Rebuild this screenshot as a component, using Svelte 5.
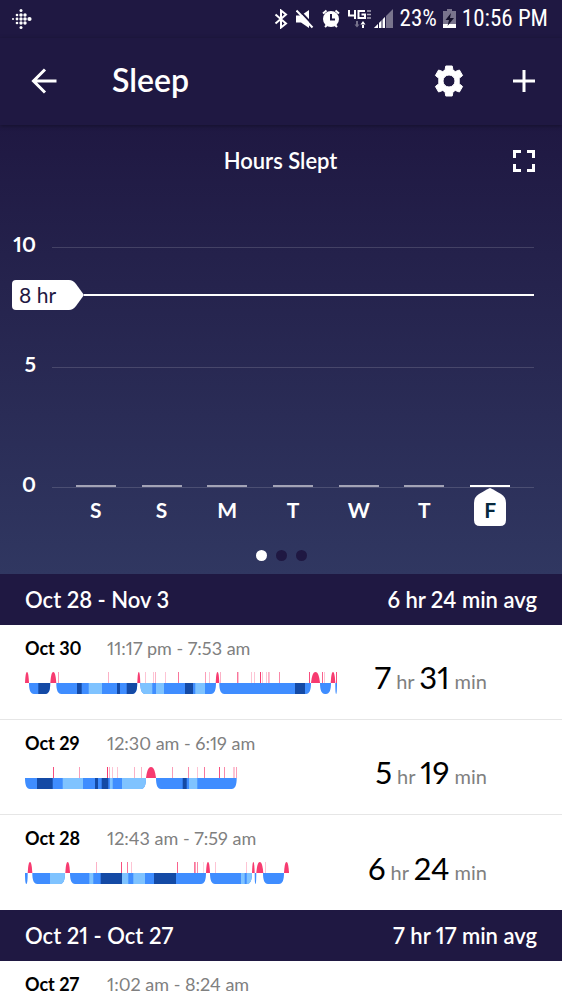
<script>
  let ticks = [10, 5, 0];
  let goal = 8;
  let days = ["S", "S", "M", "T", "W", "T", "F"];
  let today = 6;
  let page = 0;

  const colors = { light: "#7fc3ff", rem: "#3f8dff", deep: "#144aa5", awake: "#f73b70" };

  // asleep / awake: [from, to], bands: [from, to, stage], wakes: [at, opacity]
  let weeks = [
    {
      range: "Oct 28 - Nov 3",
      avg: "6 hr 24 min avg",
      logs: [
        {
          date: "Oct 30", time: "11:17 pm - 7:53 am", hr: 7, min: 31,
          asleep: [[4, 25.3], [31.3, 112.3], [115.3, 191], [194.3, 286], [295, 306], [310.3, 312]],
          awake: [[0, 4], [25.3, 31.3], [112.3, 115.3], [190.7, 194.3], [286, 295], [305.7, 310.3]],
          bands: [
            [13.3, 25.3, "deep"], [52, 56.7, "deep"], [63.7, 77, "light"], [92, 95, "deep"],
            [101.7, 112.3, "deep"], [115.3, 127.3, "light"], [131, 139, "light"],
            [160, 168, "deep"], [170.3, 180, "light"], [270, 280, "deep"]
          ],
          wakes: [
            [33, 0.5], [83, 0.4], [120, 0.3], [128, 0.3], [130, 0.4], [140, 0.3], [153, 0.7],
            [180, 0.5], [184, 0.3], [195, 0.4], [212, 0.7], [213, 0.3], [226, 0.3], [229, 0.3],
            [235, 1], [237, 0.3], [241, 0.3], [243, 0.4], [244, 0.3], [254, 0.6], [284, 0.9],
            [297, 0.8], [299, 0.3], [311, 0.9]
          ]
        },
        {
          date: "Oct 29", time: "12:30 am - 6:19 am", hr: 5, min: 19,
          asleep: [[0, 121], [131, 211.7]],
          awake: [[121, 131]],
          bands: [
            [12, 27.7, "deep"], [37.7, 58, "light"], [70, 73, "deep"], [76.7, 83.3, "deep"],
            [85, 87.7, "light"], [97, 121, "light"], [157.7, 161.7, "deep"], [164, 172.3, "light"]
          ],
          wakes: [
            [28, 0.9], [54, 0.5], [82, 1], [84, 0.4], [87, 0.3], [92, 0.3], [109, 0.4],
            [116, 0.4], [147, 0.5], [163, 0.6], [172, 0.3], [179, 0.7], [194, 0.9], [199, 0.6],
            [208, 0.3], [209, 0.3], [211, 0.5]
          ]
        },
        {
          date: "Oct 28", time: "12:43 am - 7:59 am", hr: 6, min: 24,
          asleep: [[0, 2.7], [7.3, 40], [45, 181], [185, 227], [229.7, 231.3], [238, 259]],
          awake: [[2.7, 7.3], [40.3, 45], [181, 185], [227, 229.7], [231.3, 238.3], [259, 264]],
          bands: [
            [25, 40, "light"], [64.3, 68.3, "light"], [75.7, 97, "deep"], [97, 103.3, "light"],
            [108.3, 120, "light"], [129, 151, "deep"], [216, 219.7, "light"], [221.7, 227, "light"]
          ],
          wakes: [
            [71, 0.4], [96, 0.9], [102, 0.7], [106, 0.3], [152, 0.8], [169, 0.7], [170, 0.5],
            [172, 0.6], [178, 0.2], [190, 0.3], [221, 0.3], [240, 0.3]
          ]
        }
      ]
    },
    {
      range: "Oct 21 - Oct 27",
      avg: "7 hr 17 min avg",
      logs: [{ date: "Oct 27", time: "1:02 am - 8:24 am" }]
    }
  ];

  // blue block with rounded bottom corners
  function trough([a, b]) {
    const r = Math.min(5, (b - a) / 2);
    return `M${a} 11C${a} 18 ${a + r * 0.3} 22 ${a + r} 22H${b - r}C${b - r * 0.3} 22 ${b} 18 ${b} 11Z`;
  }

  // red bump
  function bump([a, b]) {
    const w = b - a;
    return `M${a} 11C${a + w * 0.1} 4 ${a + w * 0.2} 0 ${a + w / 2} 0S${b - w * 0.1} 4 ${b} 11Z`;
  }

  // dots of the status bar logo: x, y, radius
  let dots = [
    [2, 10, 1], [6, 6, 1.3], [6, 10, 1.4], [6, 14, 1.3],
    [10, 1.5, 1.5], [10, 6, 1.7], [10, 10, 1.7], [10, 14, 1.7], [10, 18.5, 1.5],
    [14, 6, 1.7], [14, 10, 1.8], [14, 14, 1.7], [18.5, 10, 2.1]
  ];
</script>

<div class="screen">
  <div class="status">
    <svg class="logo" width="21" height="20" viewBox="0 0 21 20" fill="#fff">
      {#each dots as [x, y, r]}
        <circle cx={x} cy={y} {r} />
      {/each}
    </svg>
    <svg class="icon" width="14" height="20" viewBox="0 0 14 20" fill="none" stroke="#fff" stroke-width="2">
      <path d="M1.5 5.5 12 14.5 7 18.5V1.5L12 5.5 1.5 14.5" />
    </svg>
    <svg class="icon" width="18" height="20" viewBox="0 0 18 20">
      <path d="M0 6.5h5L13 1v18l-8-5.500H0Z" fill="#fff" />
      <path d="M2 0 18 17" stroke="#1f1842" stroke-width="2" />
      <path d="M.5 1.5 16.5 18.5" stroke="#fff" stroke-width="2" />
    </svg>
    <svg class="icon" width="18" height="20" viewBox="0 0 18 20">
      <circle cx="9" cy="10" r="8" fill="#fff" />
      <path d="M1 4.5 4.5 1.5M17 4.5 13.5 1.5M3 18l2-2M15 18l-2-2" stroke="#fff" stroke-width="2" />
      <path d="M9 5v5.500h4" fill="none" stroke="#1f1842" stroke-width="2" />
    </svg>
    <svg width="24" height="20" viewBox="0 0 24 20" fill="none">
      <path d="M1 1v5.500h7M7 1v9M17 2h-6.500v7H17V5.500h-3.500" stroke="#fff" stroke-width="2" />
      <path d="M19 2h4M19 5.500h4M19 9h4" stroke="#a9a5b8" stroke-width="1.500" />
      <path d="M6.500 15.500h5L9 18.500ZM8 12h2v4H8Z" fill="#76718b" />
      <path d="M12.500 15.500h5L15 12ZM14 15h2v4h-2Z" fill="#fff" />
    </svg>
    <svg class="signal" width="20" height="20" viewBox="0 0 20 20">
      <path d="M0 19 19 0V19Z" fill="#79748d" />
      <path d="M0 19 11 8V19Z" fill="#fff" />
      <path d="M4.500 12v7M8 9v10M11.500 6v13" stroke="#1f1842" />
    </svg>
    <span>23%</span>
    <svg width="13" height="20" viewBox="0 0 13 20">
      <path d="M4 0h5v2h4v17H0V2h4Z" fill="#79748d" />
      <path d="M0 15h13v4H0Z" fill="#fff" />
      <path d="M8 4 2.500 11H6l-1.500 6L11 9H7Z" fill="#14102b" />
    </svg>
    <span>10:56 PM</span>
  </div>

  <header>
    <button aria-label="Back">
      <svg width="26" height="26" viewBox="0 0 26 26" fill="none" stroke="#fff" stroke-width="3">
        <path d="M25.500 13H3M14 1.500 2.500 13 14 24.500" />
      </svg>
    </button>
    <h1>Sleep</h1>
    <button aria-label="Settings">
      <svg width="32" height="32" viewBox="0 0 32 32">
        <path
          fill="#fff"
          stroke="#fff"
          stroke-linejoin="round"
          fill-rule="evenodd"
          d="M12.800 1h6.400l.8 4.200 2.300 1.300 4.100-1.500 3.200 5.500-3.400 2.800v5.400l3.400 2.800-3.200 5.500-4.100-1.500-2.300 1.300-.8 4.200h-6.400l-.8-4.200-2.300-1.300L5.600 27l-3.200-5.500 3.400-2.800v-5.400L2.400 10.500 5.600 5l4.100 1.500L12 5.200ZM16 10a6 6 0 1 0 0 12 6 6 0 1 0 0-12Z"
        />
      </svg>
    </button>
    <button aria-label="Add">
      <svg width="24" height="24" viewBox="0 0 24 24" stroke="#fff" stroke-width="3">
        <path d="M12 1v22M1 12h22" />
      </svg>
    </button>
  </header>

  <section class="chart">
    <div class="chart-head">
      <h2>Hours Slept</h2>
      <button aria-label="Full screen">
        <svg width="24" height="24" viewBox="0 0 24 24" fill="none" stroke="#fff" stroke-width="3">
          <path d="M9 2.500H2.500V9M15 2.500h6.500V9M9 21.500H2.500V15M15 21.500h6.500V15" />
        </svg>
      </button>
    </div>

    <div class="plot">
      {#each ticks as tick}
        <div class="tick"><span>{tick}</span><i></i></div>
      {/each}
      <div class="goal" style="top: {100 - goal * 10}%">
        <div class="flag">
          <svg width="72" height="30" viewBox="0 0 72 30">
            <path d="M4 0H57Q61 0 64 4L72 15 64 26Q61 30 57 30H4Q0 30 0 26V4Q0 0 4 0Z" fill="#fff" />
          </svg>
          <span>{goal} hr</span>
        </div>
        <i></i>
      </div>
    </div>

    <div class="days">
      {#each days as day, i}
        <div class="day" class:today={i === today}>
          <i></i>
          {#if i === today}
            <svg width="32" height="38" viewBox="0 0 32 38">
              <path d="M16 0Q17 0 27 6Q32 9 32 15V32Q32 38 26 38H6Q0 38 0 32V15Q0 9 5 6Q15 0 16 0Z" fill="#fff" />
            </svg>
          {/if}
          <span>{day}</span>
        </div>
      {/each}
    </div>

    <div class="pager">
      {#each [0, 1, 2] as n}
        <button aria-label="Page {n + 1}" class:active={page === n} on:click={() => (page = n)}></button>
      {/each}
    </div>
  </section>

  {#each weeks as week, w}
    <section>
      <div class="week">
        <h3>{week.range}</h3>
        <span>{week.avg}</span>
      </div>
      {#each week.logs as log, l}
        <div class="log">
          <div class="info">
            <div class="when"><b>{log.date}</b><span>{log.time}</span></div>
            {#if log.asleep}
              <svg width="313" height="22" viewBox="0 0 313 22">
                <clipPath id="sleep-{w}-{l}">
                  {#each log.asleep as s}
                    <path d={trough(s)} />
                  {/each}
                </clipPath>
                <g clip-path="url(#sleep-{w}-{l})">
                  <rect y="11" width="313" height="11" fill={colors.rem} />
                  {#each log.bands as [a, b, stage]}
                    <rect x={a} y="11" width={b - a} height="11" fill={colors[stage]} />
                  {/each}
                </g>
                {#each log.awake as s}
                  <path d={bump(s)} fill={colors.awake} />
                {/each}
                {#each log.wakes as [x, opacity]}
                  <rect {x} width="1" height="11" fill={colors.awake} {opacity} />
                {/each}
              </svg>
            {/if}
          </div>
          {#if log.hr}
            <div class="total"><b>{log.hr}</b> hr <b>{log.min}</b> min</div>
          {/if}
        </div>
      {/each}
    </section>
  {/each}
</div>

<style>
  :global(body) {
    background: #fff;
  }
  .screen {
    height: 100vh;
    overflow: hidden;
    font-family: Lato, "Open Sans", sans-serif;
    font-variant-numeric: proportional-nums;
    color: #fff;
  }
  svg {
    display: block;
    flex: none;
  }
  h1, h2, h3 {
    margin: 0;
    font-weight: 600;
  }
  button {
    padding: 0;
    border: 0;
    background: none;
    cursor: pointer;
  }
  .status {
    display: flex;
    align-items: center;
    gap: 6px;
    height: 38px;
    padding: 0 14px 0 11px;
    background: #1f1842;
    font: 23px/38px "Roboto Condensed", Roboto, sans-serif;
  }
  .logo {
    margin-right: auto;
  }
  .icon {
    margin-right: 2px;
  }
  .signal {
    margin-left: -4px;
  }
  header {
    position: relative;
    display: flex;
    align-items: center;
    height: 87px;
    padding: 0 26px 2px 31px;
    box-sizing: border-box;
    background: #1f1842;
    box-shadow: 0 1px 4px rgba(0, 0, 0, 0.35);
  }
  h1 {
    flex: 1;
    margin-left: 55px;
    padding-bottom: 2px;
    font-size: 32px;
    line-height: 36px;
  }
  header button + button {
    margin-left: 47px;
  }
  .chart {
    padding-top: 15px;
    background: linear-gradient(#1f1842, #303761);
  }
  .chart-head {
    display: grid;
    grid-template-columns: 24px 1fr 24px;
    align-items: center;
    height: 42px;
    padding: 0 26px 0 25px;
  }
  .chart-head h2 {
    grid-column: 2;
    text-align: center;
    font-size: 22px;
    line-height: 24px;
  }
  .plot {
    position: relative;
    display: flex;
    flex-direction: column;
    gap: 118px;
    margin-top: 64px;
    padding-right: 28px;
  }
  .tick {
    display: flex;
    align-items: center;
    height: 2px;
  }
  .tick span {
    width: 36px;
    padding-bottom: 6px;
    margin-right: 16px;
    text-align: right;
    font-size: 21px;
    font-weight: 700;
    line-height: 24px;
  }
  .tick i {
    flex: 1;
    height: 1px;
    background: rgba(255, 255, 255, 0.15);
  }
  .goal {
    position: absolute;
    left: 12px;
    right: 28px;
    display: flex;
    align-items: center;
    height: 2px;
  }
  .goal i {
    flex: 1;
    height: 2px;
    background: #fff;
  }
  .flag {
    position: relative;
    color: #1f1842;
    font-size: 21px;
    line-height: 30px;
  }
  .flag span {
    position: absolute;
    top: 0;
    left: 7px;
  }
  .days {
    display: grid;
    grid-template-columns: repeat(7, 1fr);
    margin-top: -3px;
    padding: 0 39px 0 63px;
  }
  .day {
    position: relative;
    display: flex;
    flex-direction: column;
    align-items: center;
    font-size: 21px;
    font-weight: 700;
    line-height: 24px;
  }
  .day i {
    width: 40px;
    height: 2px;
    margin-bottom: 11px;
    background: #a3a3b6;
  }
  .day svg {
    position: absolute;
    top: 3px;
  }
  .today i {
    background: #fff;
  }
  .today span {
    position: relative;
    color: #06283d;
  }
  .pager {
    display: flex;
    justify-content: center;
    gap: 9px;
    padding: 28px 0 13px;
  }
  .pager button {
    width: 11px;
    height: 11px;
    border-radius: 50%;
    background: #1f1842;
  }
  .pager .active {
    background: #fff;
  }
  .week {
    display: flex;
    justify-content: space-between;
    padding: 0 25px;
    background: #1f1842;
    font-size: 22px;
    font-weight: 600;
    line-height: 51px;
  }
  .week h3 {
    font-size: 22px;
  }
  .log {
    display: flex;
    align-items: center;
    justify-content: space-between;
    height: 95px;
    box-sizing: border-box;
    padding: 0 75px 0 25px;
    border-bottom: 1px solid #e6e6e6;
    background: #fff;
    color: #808080;
  }
  .log:last-child {
    border-bottom: 0;
  }
  .info {
    align-self: flex-start;
    padding-top: 11px;
  }
  .when {
    display: grid;
    grid-template-columns: 82px auto;
    margin-bottom: 12px;
    font-size: 18px;
    line-height: 24px;
  }
  .when b {
    color: #000;
  }
  .total {
    padding-top: 14px;
    font-size: 20px;
    line-height: 36px;
    white-space: nowrap;
  }
  .total b {
    color: #000;
    font-size: 31px;
    font-weight: 400;
  }
</style>
